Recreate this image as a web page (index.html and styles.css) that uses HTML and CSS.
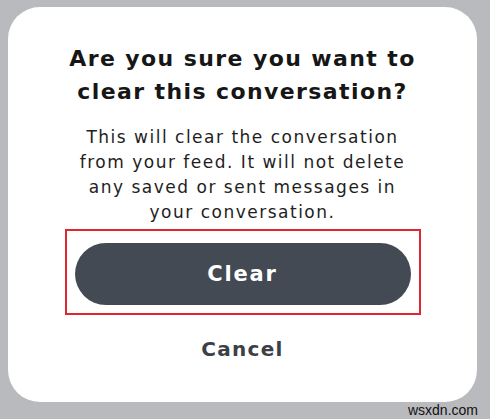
FILE: index.html
```html
<!DOCTYPE html>
<html>
<head>
<meta charset="utf-8">
<link rel="stylesheet" href="styles.css">
</head>
<body>
<div class="page">
  <div class="card">
    <h1 class="title">Are you sure you want to<br>clear this conversation?</h1>
    <p class="message">This will clear the conversation<br>from your feed. It will not delete<br>any saved or sent messages in<br>your conversation.</p>
    <div class="highlight">
      <button class="btn-clear">Clear</button>
    </div>
    <button class="btn-cancel">Cancel</button>
  </div>
  <div class="watermark">wsxdn.com</div>
</div>
</body>
</html>
```
FILE: styles.css
```css
html, body {
  margin: 0;
  padding: 0;
  background: #b9babe;
}
.page {
  width: 490px;
  height: 419px;
  padding: 7px 13px 0 8px;
  box-sizing: border-box;
  display: flex;
  flex-direction: column;
}
.card {
  width: 469px;
  height: 395px;
  background: #ffffff;
  border-radius: 32px;
  display: flex;
  flex-direction: column;
  align-items: center;
  box-sizing: border-box;
  padding-top: 35px;
}
.title {
  margin: 0;
  font-family: "DejaVu Sans", sans-serif;
  font-weight: 700;
  font-size: 22px;
  line-height: 33px;
  color: #161616;
  text-align: center;
  letter-spacing: 1.4px;
}
.message {
  margin: 17px 0 0 0;
  font-family: "DejaVu Sans", sans-serif;
  font-weight: 400;
  font-size: 17px;
  line-height: 25px;
  color: #1e1e1e;
  text-align: center;
  letter-spacing: 1.5px;
}
.highlight {
  margin-top: 4px;
  border: 2px solid #e0262f;
  padding: 12px 8px 8px 8px;
  display: flex;
}
.btn-clear {
  width: 336px;
  height: 62px;
  border: none;
  border-radius: 31px;
  background: #434a53;
  color: #ffffff;
  font-family: "DejaVu Sans", sans-serif;
  font-weight: 700;
  font-size: 21px;
  letter-spacing: 1.8px;
  padding: 0;
}
.btn-cancel {
  margin-top: 22px;
  border: none;
  background: none;
  color: #3c4046;
  font-family: "DejaVu Sans", sans-serif;
  font-weight: 700;
  font-size: 20px;
  line-height: 24px;
  letter-spacing: 1.3px;
  padding: 0;
}
.watermark {
  align-self: flex-end;
  margin-top: 1px;
  font-family: "Liberation Sans", Arial, sans-serif;
  font-size: 14px;
  line-height: 14px;
  color: #111111;
  margin-right: -1px;
}
```
